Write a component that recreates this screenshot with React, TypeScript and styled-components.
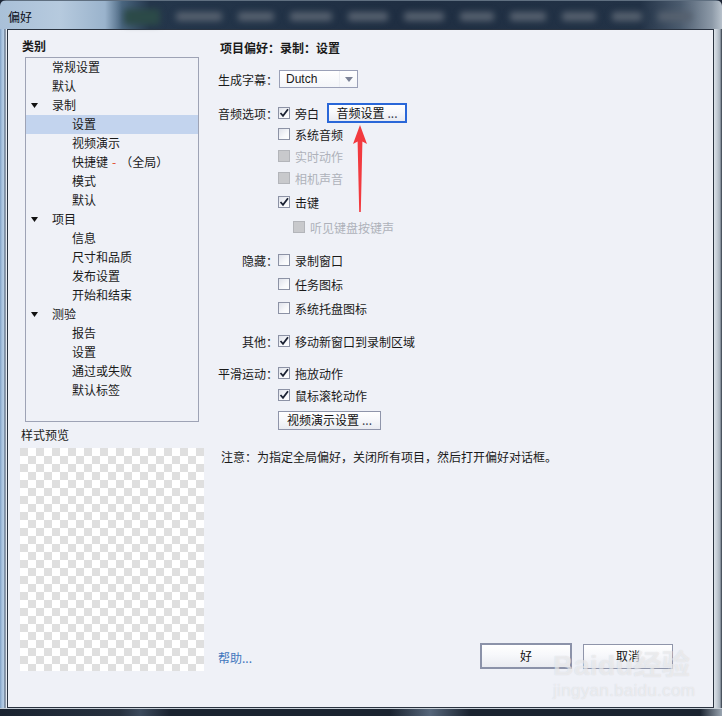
import React from "react";
import styled, { createGlobalStyle } from "styled-components";

const Global = createGlobalStyle`
  html, body { margin: 0; padding: 0; background: #1d2636; }
  body { font-family: "Noto Sans CJK SC", "Noto Sans", sans-serif; font-size: 12px; color: #1a1a1a; }
  * { box-sizing: border-box; }
`;

const Window = styled.div`
  position: relative;
  width: 722px;
  height: 716px;
  display: flex;
  flex-direction: column;
  overflow: hidden;
  border-radius: 6px 6px 0 0;
  background: #1d2636;
`;

const TitleBar = styled.div`
  height: 29px;
  flex: none;
  display: flex;
  align-items: center;
  background: linear-gradient(
    90deg,
    #a9c0d8 0,
    #b6cade 60px,
    #9ab3cc 105px,
    #4a6680 122px,
    #24364b 150px,
    #1f2e42 400px,
    #223246 640px,
    #4b5b6e 680px,
    #8d9aa8 712px,
    #b7c1cb 722px
  );
  border-top: 1px solid #5f6f80;
`;

const TitleText = styled.span`
  width: 124px;
  flex: none;
  padding-left: 8px;
  padding-top: 2px;
  font-size: 12px;
  color: #0b0f18;
`;

const Blurs = styled.div`
  display: flex;
  align-items: center;
  gap: 16px;
  filter: blur(3px);
  padding-top: 3px;
`;

const Blob = styled.span<{ $w: number; $c?: string }>`
  width: ${(p) => p.$w}px;
  height: ${(p) => (p.$c ? 16 : 9)}px;
  background: ${(p) => p.$c || "#56616f"};
  border-radius: 3px;
`;

const Middle = styled.div`
  flex: 1;
  display: flex;
  min-height: 0;
`;

const LeftFrame = styled.div`
  width: 7px;
  flex: none;
  background: linear-gradient(
    90deg,
    #7e9fc4 0,
    #a9c3df 2px,
    #b9cfe5 4px,
    #42526a 5px,
    #dfe6ee 6px,
    #eef2f7 7px
  );
`;

const RightFrame = styled.div`
  width: 8px;
  flex: none;
  background: linear-gradient(90deg, #dbe2e8 0, #c4ccd5 3px, #a4afba 6px, #2b3440 8px);
`;

const BottomFrame = styled.div`
  height: 8px;
  flex: none;
  background: linear-gradient(
    90deg,
    #1a2330 0,
    #27313f 120px,
    #3c4a5c 140px,
    #1a2330 170px,
    #1a2330 390px,
    #56667a 430px,
    #1a2330 470px,
    #1a2330 700px,
    #9aa5b1 722px
  );
  box-shadow: inset 0 1px 0 #c6ced6;
`;

const Client = styled.div`
  flex: 1;
  display: flex;
  border: 1px solid #2a3340;
  background: #eff1f7;
  min-width: 0;
`;

const LeftPane = styled.div`
  width: 200px;
  flex: none;
  display: flex;
  flex-direction: column;
  padding-top: 8px;
`;

const PaneTitle = styled.div`
  margin-left: 14px;
  line-height: 16px;
  font-weight: 700;
`;

const Tree = styled.div`
  margin: 3px 0 0 17px;
  width: 174px;
  height: 365px;
  border: 1px solid #9ea3b5;
  display: flex;
  flex-direction: column;
`;

const TreeRow = styled.div<{ $indent: number; $selected?: boolean }>`
  height: 19px;
  flex: none;
  display: flex;
  align-items: center;
  padding-left: ${(p) => 5 + p.$indent}px;
  padding-bottom: 3px;
  background: ${(p) => (p.$selected ? "#c3d4ee" : "transparent")};
  white-space: nowrap;
`;

const Caret = styled.span`
  width: 21px;
  flex: none;
  display: flex;
  align-items: center;
  padding-top: 2px;
`;

const Red = styled.span`
  color: #e0451e;
  padding: 0 4px;
`;

const PreviewLabel = styled.div`
  margin: 5px 0 0 13px;
  line-height: 16px;
`;

const Checker = styled.div`
  margin: 5px 0 0 12px;
  width: 184px;
  height: 223px;
  background-color: #fff;
  background-image: conic-gradient(#fff 0 25%, #dfdfdf 0 50%, #fff 0 75%, #dfdfdf 0);
  background-size: 16px 16px;
`;

const RightPane = styled.div`
  position: relative;
  flex: 1;
  display: flex;
  flex-direction: column;
  padding: 10px 40px 38px 10px;
`;

const Heading = styled.div`
  margin-left: 2px;
  line-height: 16px;
  font-weight: 700;
`;

const FormRow = styled.div<{ $mt: number }>`
  display: grid;
  grid-template-columns: 60px 1fr;
  align-items: center;
  height: 20px;
  margin-top: ${(p) => p.$mt}px;
`;

const Label = styled.span`
  text-align: right;
  white-space: nowrap;
`;

const Controls = styled.div<{ $indent?: number }>`
  display: flex;
  align-items: center;
  gap: 8px;
  padding-left: ${(p) => p.$indent || 0}px;
`;

const CheckWrap = styled.label<{ $disabled?: boolean }>`
  display: flex;
  align-items: center;
  gap: 5px;
  color: ${(p) => (p.$disabled ? "#aeb1ba" : "#1a1a1a")};
  white-space: nowrap;
`;

const Box = styled.span<{ $disabled?: boolean }>`
  width: 12px;
  height: 12px;
  flex: none;
  display: flex;
  align-items: center;
  justify-content: center;
  border: 1px solid ${(p) => (p.$disabled ? "#b3b5ba" : "#8c92a5")};
  background: ${(p) =>
    p.$disabled ? "#c8c9cc" : "linear-gradient(135deg, #dfe2ea 0, #f7f8fb 60%, #ffffff 100%)"};
`;

const Select = styled.div`
  width: 79px;
  height: 18px;
  margin-left: 1px;
  display: flex;
  align-items: center;
  border: 1px solid #9aa0b7;
  background: linear-gradient(#ffffff, #f3f5f9);
  font-family: "Liberation Sans", "Noto Sans", sans-serif;
  font-size: 12px;
`;

const SelectText = styled.span`
  flex: 1;
  padding-left: 6px;
`;

const SelectArrow = styled.span`
  width: 18px;
  height: 100%;
  display: flex;
  align-items: center;
  justify-content: center;
  border-left: 1px solid #eceef3;
`;

const Button = styled.button<{ $w: number; $h?: number; $focus?: boolean; $default?: boolean }>`
  width: ${(p) => p.$w}px;
  height: ${(p) => p.$h || 20}px;
  padding: 0;
  margin: 0;
  font-family: "Noto Sans CJK SC", "Noto Sans", sans-serif;
  font-size: 12px;
  color: #111;
  border: ${(p) => (p.$focus ? "2px solid #2a67d8" : p.$default ? "2px solid #8b92a9" : "1px solid #8f95aa")};
  background: linear-gradient(#ffffff 0, #f7f8fb 45%, #e9ebf1 100%);
  display: flex;
  align-items: center;
  justify-content: center;
  line-height: 1;
`;

const Dots = styled.span`
  margin-left: 3px;
  letter-spacing: 0;
  color: #3a3f52;
`;

const Note = styled.div`
  margin: 17px 0 0 3px;
  line-height: 20px;
`;

const Spacer = styled.div`
  flex: 1;
`;

const Footer = styled.div`
  display: flex;
  align-items: center;
  height: 26px;
`;

const Help = styled.a`
  color: #4277bd;
  text-decoration: none;
  flex: 1;
  margin-top: 2px;
`;

const FooterButtons = styled.div`
  display: flex;
  align-items: center;
  gap: 11px;
`;

const ArrowSvg = styled.svg`
  position: absolute;
  left: 143px;
  top: 94px;
`;

const Watermark = styled.div`
  position: absolute;
  left: 553px;
  top: 650px;
  display: flex;
  flex-direction: column;
  align-items: flex-start;
  pointer-events: none;
  color: rgba(255, 255, 255, 0.5);
  text-shadow: 0 0 1px rgba(170, 172, 180, 0.45);
  font-family: "Liberation Sans", "Noto Sans CJK SC", sans-serif;
`;

const WmBig = styled.span`
  font-size: 28px;
  font-weight: 700;
  line-height: 32px;
  letter-spacing: 0.5px;
`;

const WmSmall = styled.span`
  font-size: 17px;
  line-height: 18px;
  letter-spacing: 0.3px;
`;

const CheckMark = () => (
  <svg width="10" height="10" viewBox="0 0 10 10">
    <path d="M1.5 5 L4 7.8 L9 1.2" fill="none" stroke="#1b2233" strokeWidth="1.8" />
  </svg>
);

const Check = ({
  label,
  checked,
  disabled,
}: {
  label: string;
  checked?: boolean;
  disabled?: boolean;
}) => (
  <CheckWrap $disabled={disabled}>
    <Box $disabled={disabled}>{checked && <CheckMark />}</Box>
    <span>{label}</span>
  </CheckWrap>
);

type Node = { text: React.ReactNode; level: 1 | 2; caret?: boolean; selected?: boolean };

const tree: Node[] = [
  { text: "常规设置", level: 1 },
  { text: "默认", level: 1 },
  { text: "录制", level: 1, caret: true },
  { text: "设置", level: 2, selected: true },
  { text: "视频演示", level: 2 },
  {
    text: (
      <>
        快捷键<Red>-</Red>（全局）
      </>
    ),
    level: 2,
  },
  { text: "模式", level: 2 },
  { text: "默认", level: 2 },
  { text: "项目", level: 1, caret: true },
  { text: "信息", level: 2 },
  { text: "尺寸和品质", level: 2 },
  { text: "发布设置", level: 2 },
  { text: "开始和结束", level: 2 },
  { text: "测验", level: 1, caret: true },
  { text: "报告", level: 2 },
  { text: "设置", level: 2 },
  { text: "通过或失败", level: 2 },
  { text: "默认标签", level: 2 },
];

const blobs: { w: number; c?: string }[] = [
  { w: 36, c: "#2c4a48" },
  { w: 46 },
  { w: 36 },
  { w: 42 },
  { w: 40 },
  { w: 40 },
  { w: 34 },
  { w: 36 },
  { w: 34 },
  { w: 30 },
  { w: 34 },
];

export default function App() {
  return (
    <>
      <Global />
      <Window>
        <TitleBar>
          <TitleText>偏好</TitleText>
          <Blurs>
            {blobs.map((b, i) => (
              <Blob key={i} $w={b.w} $c={b.c} />
            ))}
          </Blurs>
        </TitleBar>
        <Middle>
          <LeftFrame />
          <Client>
            <LeftPane>
              <PaneTitle>类别</PaneTitle>
              <Tree>
                {tree.map((n, i) => (
                  <TreeRow key={i} $indent={n.level === 2 ? 20 : 0} $selected={n.selected}>
                    {n.level === 1 && (
                      <Caret>
                        {n.caret && (
                          <svg width="7" height="5" viewBox="0 0 7 5">
                            <path d="M0 0 H7 L3.5 5 Z" fill="#111" />
                          </svg>
                        )}
                      </Caret>
                    )}
                    {n.level === 2 && <Caret />}
                    <span>{n.text}</span>
                  </TreeRow>
                ))}
              </Tree>
              <PreviewLabel>样式预览</PreviewLabel>
              <Checker />
            </LeftPane>

            <RightPane>
              <Heading>项目偏好：录制：设置</Heading>

              <FormRow $mt={13}>
                <Label>生成字幕：</Label>
                <Controls>
                  <Select>
                    <SelectText>Dutch</SelectText>
                    <SelectArrow>
                      <svg width="8" height="5" viewBox="0 0 8 5">
                        <path d="M0 0 H8 L4 5 Z" fill="#7c8397" />
                      </svg>
                    </SelectArrow>
                  </Select>
                </Controls>
              </FormRow>

              <FormRow $mt={14}>
                <Label>音频选项：</Label>
                <Controls>
                  <Check label="旁白" checked />
                  <Button $w={80} $focus>
                    音频设置<Dots>...</Dots>
                  </Button>
                </Controls>
              </FormRow>
              <FormRow $mt={1}>
                <span />
                <Controls>
                  <Check label="系统音频" />
                </Controls>
              </FormRow>
              <FormRow $mt={2}>
                <span />
                <Controls>
                  <Check label="实时动作" disabled />
                </Controls>
              </FormRow>
              <FormRow $mt={2}>
                <span />
                <Controls>
                  <Check label="相机声音" disabled />
                </Controls>
              </FormRow>
              <FormRow $mt={4}>
                <span />
                <Controls>
                  <Check label="击键" checked />
                </Controls>
              </FormRow>
              <FormRow $mt={5}>
                <span />
                <Controls $indent={15}>
                  <Check label="听见键盘按键声" disabled />
                </Controls>
              </FormRow>

              <FormRow $mt={13}>
                <Label>隐藏：</Label>
                <Controls>
                  <Check label="录制窗口" />
                </Controls>
              </FormRow>
              <FormRow $mt={4}>
                <span />
                <Controls>
                  <Check label="任务图标" />
                </Controls>
              </FormRow>
              <FormRow $mt={4}>
                <span />
                <Controls>
                  <Check label="系统托盘图标" />
                </Controls>
              </FormRow>

              <FormRow $mt={13}>
                <Label>其他：</Label>
                <Controls>
                  <Check label="移动新窗口到录制区域" checked />
                </Controls>
              </FormRow>

              <FormRow $mt={12}>
                <Label>平滑运动：</Label>
                <Controls>
                  <Check label="拖放动作" checked />
                </Controls>
              </FormRow>
              <FormRow $mt={2}>
                <span />
                <Controls>
                  <Check label="鼠标滚轮动作" checked />
                </Controls>
              </FormRow>
              <FormRow $mt={5}>
                <span />
                <Controls>
                  <Button $w={103} $h={19}>
                    视频演示设置<Dots>...</Dots>
                  </Button>
                </Controls>
              </FormRow>

              <Note>注意：为指定全局偏好，关闭所有项目，然后打开偏好对话框。</Note>

              <Spacer />

              <Footer>
                <Help href="#">帮助...</Help>
                <FooterButtons>
                  <Button $w={92} $h={26} $default>
                    好
                  </Button>
                  <Button $w={90} $h={25}>
                    取消
                  </Button>
                </FooterButtons>
              </Footer>

              <ArrowSvg width="18" height="92" viewBox="0 0 18 92">
                <path
                  d="M9 1 L16 20 L11.4 17.5 L9.8 88 L8.2 88 L6.6 17.5 L2 20 Z"
                  fill="#f23a3f"
                />
              </ArrowSvg>
            </RightPane>
          </Client>
          <RightFrame />
        </Middle>
        <BottomFrame />
        <Watermark>
          <WmBig>Baidu经验</WmBig>
          <WmSmall>jingyan.baidu.com</WmSmall>
        </Watermark>
      </Window>
    </>
  );
}
